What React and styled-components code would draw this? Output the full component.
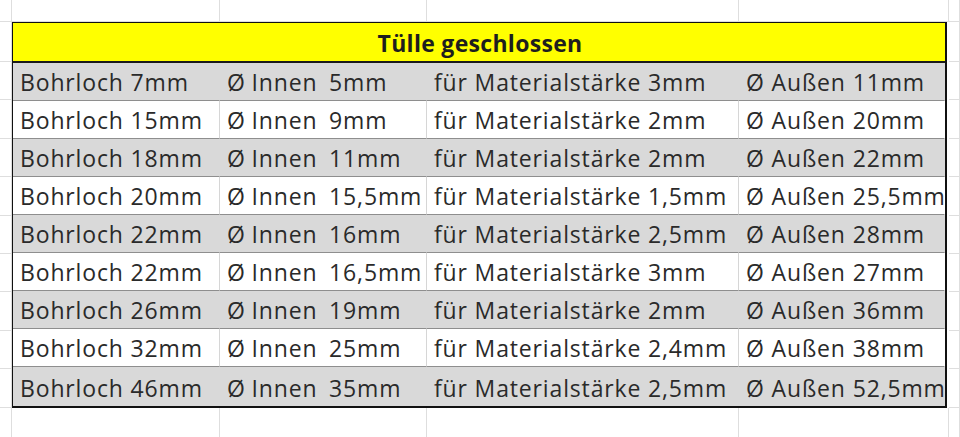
import React from "react";
import styled, { createGlobalStyle } from "styled-components";

const GlobalStyle = createGlobalStyle`
  html, body {
    margin: 0;
    padding: 0;
    background: #ffffff;
  }
  #root {
    width: 960px;
    height: 437px;
    overflow: hidden;
  }
`;

const cols = "12px 208px 207px 312px 210px 1fr";
const gridLine = "#dedede";

const rows = [
  ["Bohrloch 7mm", "Ø Innen  5mm", "für Materialstärke 3mm", "Ø Außen 11mm"],
  ["Bohrloch 15mm", "Ø Innen  9mm", "für Materialstärke 2mm", "Ø Außen 20mm"],
  ["Bohrloch 18mm", "Ø Innen  11mm", "für Materialstärke 2mm", "Ø Außen 22mm"],
  ["Bohrloch 20mm", "Ø Innen  15,5mm", "für Materialstärke 1,5mm", "Ø Außen 25,5mm"],
  ["Bohrloch 22mm", "Ø Innen  16mm", "für Materialstärke 2,5mm", "Ø Außen 28mm"],
  ["Bohrloch 22mm", "Ø Innen  16,5mm", "für Materialstärke 3mm", "Ø Außen 27mm"],
  ["Bohrloch 26mm", "Ø Innen  19mm", "für Materialstärke 2mm", "Ø Außen 36mm"],
  ["Bohrloch 32mm", "Ø Innen  25mm", "für Materialstärke 2,4mm", "Ø Außen 38mm"],
  ["Bohrloch 46mm", "Ø Innen  35mm", "für Materialstärke 2,5mm", "Ø Außen 52,5mm"],
];

const Sheet = styled.div`
  display: grid;
  grid-template-columns: ${cols};
  grid-template-rows: 22px 40px repeat(9, 38.4px) 38px;
  width: 960px;
  font-family: "Open Sans", "Liberation Sans", sans-serif;
`;

const Blank = styled.div`
  border-right: 1px solid ${gridLine};
  border-bottom: 1px solid ${gridLine};
`;

const Table = styled.div`
  grid-column: 2 / 6;
  grid-row: 2 / 12;
  display: grid;
  grid-template-columns: 207px 207px 312px 1fr;
  grid-template-rows: 40px repeat(9, 1fr);
  border: 2px solid #111111;
  margin: -1px 2px 0 -1px;
  box-sizing: border-box;
`;

const Header = styled.div`
  grid-column: 1 / 5;
  background: #ffff00;
  border-bottom: 2px solid #1a1a1a;
  display: flex;
  align-items: center;
  justify-content: center;
  font-weight: 700;
  font-size: 23px;
  letter-spacing: 0.3px;
  color: #1e1e1e;
  padding: 2px 0 0 2px;
`;

const Cell = styled.div`
  background: ${(p) => (p.$shaded ? "#d9d9d9" : "#ffffff")};
  border-right: 1px solid ${(p) => (p.$shaded || p.$last ? "transparent" : "#d6d6d6")};
  border-bottom: ${(p) => (p.$bottom ? "none" : "1px solid #8e8e8e")};
  display: flex;
  align-items: flex-end;
  padding: 0 0 2px 7px;
  font-size: 23px;
  letter-spacing: 0.85px;
  word-spacing: ${(p) => (p.$tight ? "-1px" : "0")};
  color: #2a2a2a;
  white-space: pre;
  overflow: visible;
  min-width: 0;
`;

export default function App() {
  const blanks = Array.from({ length: 32 }, (_, i) => <Blank key={i} />);
  return (
    <>
      <GlobalStyle />
      <Sheet>
        <Table>
          <Header>Tülle geschlossen</Header>
          {rows.map((r, i) =>
            r.map((text, j) => (
              <Cell
                key={`${i}-${j}`}
                $shaded={i % 2 === 0}
                $last={j === 3}
                $tight={j === 1}
                $bottom={i === rows.length - 1}
              >
                {text}
              </Cell>
            ))
          )}
        </Table>
        {blanks}
      </Sheet>
    </>
  );
}
